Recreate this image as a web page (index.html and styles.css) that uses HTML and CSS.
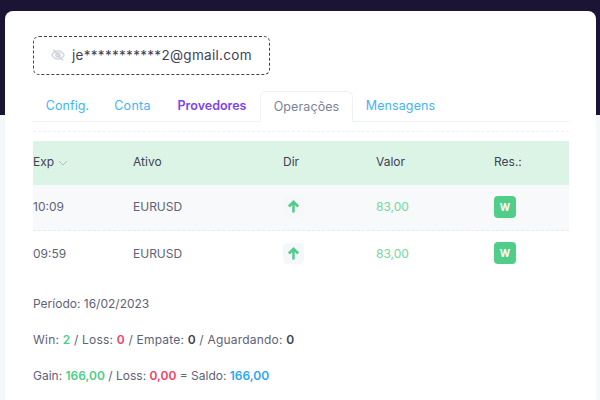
FILE: index.html
```html
<!DOCTYPE html>
<html lang="pt">
<head>
    <meta charset="UTF-8">
    <title>Operações</title>
    <link rel="stylesheet" href="styles.css">
</head>
<body>
    <div class="top-band"></div>
    <div class="card">
        <div class="email-box">
            <svg class="eye" width="14" height="14" viewBox="0 0 24 24" fill="none" stroke="#ced1dc" stroke-width="2.400" stroke-linecap="round">
                <path d="M1.500 12C4 7.500 7.700 5 12 5s8 2.500 10.500 7C20 16.500 16.300 19 12 19S4 16.500 1.500 12z"/>
                <circle cx="12" cy="12" r="3.500"/>
                <path d="M4.500 3.500l15 17"/>
            </svg>
            <span>je***********2@gmail.com</span>
        </div>

        <div class="tabs">
            <a class="tab tab-config">Config.</a>
            <a class="tab tab-conta">Conta</a>
            <a class="tab tab-prov">Provedores</a>
            <a class="tab tab-active">Operações</a>
            <a class="tab tab-msg">Mensagens</a>
        </div>

        <div class="table-wrap">
            <div class="row row-head">
                <div>Exp
                    <svg class="sort" width="10" height="6" viewBox="0 0 10 6" fill="none" stroke="#b5b8c6" stroke-width="1">
                        <path d="M1 1l4 4 4-4"/>
                    </svg>
                </div>
                <div>Ativo</div>
                <div>Dir</div>
                <div>Valor</div>
                <div>Res.:</div>
            </div>
            <div class="row row-odd">
                <div class="cell-time">10:09</div>
                <div>EURUSD</div>
                <div><span class="dir"><svg width="13" height="13" viewBox="0 0 12 12" fill="none" stroke="#50cd89" stroke-width="2.300"><path d="M6 11.500V2M1.700 6L6 1.700 10.300 6"/></svg></span></div>
                <div class="valor">83,00</div>
                <div><span class="badge">W</span></div>
            </div>
            <div class="row">
                <div class="cell-time">09:59</div>
                <div>EURUSD</div>
                <div><span class="dir"><svg width="13" height="13" viewBox="0 0 12 12" fill="none" stroke="#50cd89" stroke-width="2.300"><path d="M6 11.500V2M1.700 6L6 1.700 10.300 6"/></svg></span></div>
                <div class="valor">83,00</div>
                <div><span class="badge">W</span></div>
            </div>
        </div>

        <div class="summary">
            <p>Período: 16/02/2023</p>
            <p class="summary-wide">Win: <b class="green">2</b> / Loss: <b class="red">0</b> / Empate: <b class="dark">0</b> / Aguardando: <b class="dark">0</b></p>
            <p>Gain: <b class="green">166,00</b> / Loss: <b class="red">0,00</b> = Saldo: <b class="blue">166,00</b></p>
        </div>
    </div>
</body>
</html>
```

FILE: styles.css
```css
html, body {
    height: 100%;
}
body {
    margin: 0;
    overflow: hidden;
    background-color: #f4f8fb;
    font-family: Inter, "Noto Sans", sans-serif;
    font-size: 12px;
    color: #5e6278;
}
.top-band {
    height: 115px;
    background-color: #1b1435;
}
.card {
    margin: -104px 4px 0 5px;
    height: 400px;
    box-sizing: border-box;
    padding: 25px 27px 0 28px;
    background: white;
    border-radius: 8px;
}
.email-box {
    width: 237px;
    height: 39px;
    box-sizing: border-box;
    border: 1px dashed #3f4254;
    border-radius: 6px;
    display: flex;
    align-items: center;
    padding: 0 0 1px 17px;
    font-size: 13.5px;
    letter-spacing: 0.3px;
    color: #3f4254;
}
.eye {
    margin-right: 7px;
}
.tabs {
    display: flex;
    height: 31px;
    margin-top: 16px;
    border-bottom: 1px solid #eff2f5;
    box-sizing: border-box;
}
.tab {
    box-sizing: border-box;
    height: 31px;
    padding-top: 7px;
    font-size: 12.5px;
    color: #3fb4f5;
    text-align: center;
}
.tab-config { width: 68px; padding-left: 1px; letter-spacing: 0.1px; }
.tab-conta { width: 63px; letter-spacing: 0.3px; }
.tab-prov { width: 96px; font-weight: 600; color: #7e44ec; }
.tab-active {
    width: 93px;
    border: 1px solid #eff2f5;
    border-bottom-color: white;
    border-radius: 6px 6px 0 0;
    color: #7e8299;
    letter-spacing: 0.1px;
}
.tab-msg { width: 95px; letter-spacing: 0.1px; }
.table-wrap {
    margin-top: 9px;
    padding-top: 9px;
    border-top: 1px dashed #eff2f5;
}
.row {
    display: grid;
    grid-template-columns: 100px 150px 93px 118px 75px;
    align-items: center;
    height: 46px;
    box-sizing: border-box;
    padding-bottom: 2px;
    border-bottom: 1px dashed #e9ebf1;
    font-size: 12px;
}
.row-head {
    height: 44px;
    padding-bottom: 4px;
    background-color: #dcf4e6;
    border-bottom: none;
    color: #3f4254;
}
.row-odd {
    background-color: #f8f9fb;
}
.row:last-child {
    border-bottom: none;
}
.sort {
    margin-left: 0;
}
.dir {
    display: inline-flex;
    align-items: center;
    justify-content: center;
    width: 21px;
    height: 21px;
    background-color: #f5f8fa;
    border-radius: 4px;
}
.valor {
    color: #6fd99f;
    font-size: 12px;
}
.badge {
    display: inline-flex;
    align-items: center;
    justify-content: center;
    width: 22px;
    height: 22px;
    background-color: #50cd89;
    border-radius: 4px;
    color: white;
    font-size: 10px;
    font-weight: 700;
}
.summary {
    margin-top: 9px;
}
.summary p {
    margin: 0;
    height: 36px;
    line-height: 36px;
    font-size: 12px;
}
.summary-wide {
    letter-spacing: 0.2px;
}
.green { color: #50cd89; font-weight: 600; }
.red { color: #f1416c; font-weight: 600; }
.dark { color: #3f4254; font-weight: 600; }
.blue { color: #2aa8f2; font-weight: 600; }
```
